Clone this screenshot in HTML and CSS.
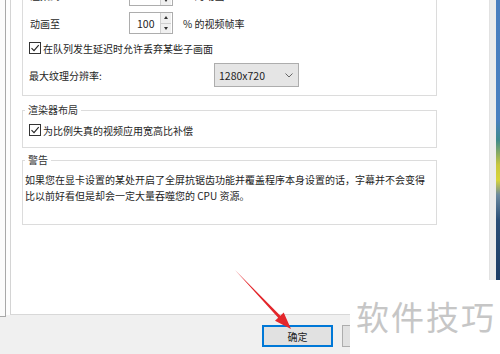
FILE: index.html
```html
<!DOCTYPE html>
<html lang="zh-CN">
<head>
<meta charset="utf-8">
<link rel="stylesheet" href="styles.css">
</head>
<body>
<div class="screen">
  <div class="top">
    <div class="edge"></div>
    <div class="gutter"></div>
    <div class="page">
      <fieldset class="group g1">
        <div class="row spin-row">
          <span class="label">渲染到</span>
          <div class="spin"><span class="val">50</span><span class="arrows"><i class="up"></i><i class="dn"></i></span></div>
          <span class="unit">% 的动画</span>
        </div>
        <div class="row spin-row">
          <span class="label">动画至</span>
          <div class="spin"><span class="val">100</span><span class="arrows"><i class="up"></i><i class="dn"></i></span></div>
          <span class="unit">% 的视频帧率</span>
        </div>
        <div class="row check-row r-check">
          <span class="cb"><svg width="10" height="10" viewBox="0 0 10 10"><path d="M1.5 5.2 L4 7.6 L8.7 2.2" fill="none" stroke="#222" stroke-width="1.1"/></svg></span>
          <span>在队列发生延迟时允许丢弃某些子画面</span>
        </div>
        <div class="row select-row">
          <span class="label wide">最大纹理分辨率:</span>
          <div class="select"><span>1280x720</span><svg width="8" height="5" viewBox="0 0 8 5"><path d="M0.5 0.5 L4 4 L7.5 0.5" fill="none" stroke="#666" stroke-width="1"/></svg></div>
        </div>
      </fieldset>
      <fieldset class="group g2">
        <legend>渲染器布局</legend>
        <div class="row check-row">
          <span class="cb"><svg width="10" height="10" viewBox="0 0 10 10"><path d="M1.5 5.2 L4 7.6 L8.7 2.2" fill="none" stroke="#222" stroke-width="1.1"/></svg></span>
          <span>为比例失真的视频应用宽高比补偿</span>
        </div>
      </fieldset>
      <fieldset class="group g3">
        <legend>警告</legend>
        <p class="warn">如果您在显卡设置的某处开启了全屏抗锯齿功能并覆盖程序本身设置的话，字幕并不会变得<br>比以前好看但是却会一定大量吞噬您的 CPU 资源。</p>
      </fieldset>
    </div>
    <div class="side"></div>
    <div class="desk"></div>
  </div>
  <div class="bottom">
    <button class="btn primary">确定</button>
    <button class="btn" aria-label="取消"></button>
  </div>
  <div class="watermark">软件技巧</div>
  <svg class="arrow" width="500" height="354" viewBox="0 0 500 354">
    <polygon points="235,270 280.4,315.7 283.7,312.6 291,329 275,320.8 278.2,317.7" fill="#e3262b"/>
  </svg>
</div>
</body>
</html>
```

FILE: styles.css
```css
* { box-sizing: border-box; }
html, body { margin: 0; padding: 0; }
body {
  width: 500px;
  height: 354px;
  overflow: hidden;
  background: #f0f0f0;
  font-family: "Noto Sans CJK SC", "Noto Sans", sans-serif;
  font-size: 10px;
  color: #1e1e1e;
}
.screen {
  position: relative;
  width: 500px;
  height: 354px;
  display: flex;
  flex-direction: column;
}
.top {
  height: 317px;
  display: flex;
  background: #f0f0f0;
}
.edge {
  width: 6px;
  height: 317px;
  background: #fbfbfb;
  border-right: 1px solid #a8a8a8;
  border-bottom: 1px solid #a8a8a8;
}
.gutter {
  width: 4px;
  height: 315px;
  background: #fdfdfd;
}
.page {
  width: 479px;
  height: 315px;
  background: #fff;
  border-left: 1px solid #d4d4d4;
  border-bottom: 1px solid #d8d8d8;
  overflow: hidden;
  display: flex;
  flex-direction: column;
}
.side {
  width: 7px;
  height: 317px;
  background: #ececec;
  border-left: 1px solid #e2e2e2;
}
.desk {
  width: 4px;
  height: 317px;
  background: linear-gradient(to bottom, #4a7fbf 0px, #4a80c0 120px, #3f8a8c 140px, #c9c840 165px, #d8d53a 180px, #6c8aa0 195px, #2b4f78 220px, #1d3d66 280px, #1d3d66 317px);
}
.group {
  margin: 0 0 0 11px;
  width: 415px;
  min-inline-size: 0;
  border: 1px solid #dcdcdc;
  padding: 0 0 0 2px;
}
.group legend {
  padding: 0 3px;
  line-height: 14px;
  height: 14px;
  color: #333;
}
.g1 {
  margin-top: -31px;
  padding-top: 14px;
  padding-bottom: 8px;
  display: flex;
  flex-direction: column;
}
.row {
  display: flex;
  align-items: center;
  padding-left: 4px;
}
.spin-row { height: 22px; }
.spin-row + .spin-row { margin-top: 6px; }
.label { width: 100px; padding-left: 1px; }
.label.wide { width: 185px; padding-left: 0; }
.spin {
  width: 44px;
  height: 22px;
  border: 1px solid #adadad;
  background: #fff;
  display: flex;
  align-items: center;
  justify-content: space-between;
}
.val { padding-left: 7px; font-size: 10.5px; }
.arrows {
  width: 11px;
  height: 20px;
  margin-right: 1px;
  display: flex;
  flex-direction: column;
  border-left: 1px solid #cfcfcf;
  background: #f0f0f0;
}
.arrows i {
  flex: 1;
  display: flex;
  align-items: center;
  justify-content: center;
}
.arrows i + i { border-top: 1px solid #cfcfcf; }
.arrows i::before {
  content: "";
  width: 0;
  height: 0;
  border-left: 2.5px solid transparent;
  border-right: 2.5px solid transparent;
}
.arrows .up::before { border-bottom: 3px solid #333; }
.arrows .dn::before { border-top: 3px solid #333; }
.unit { margin-left: 10px; }
.check-row { height: 14px; }
.r-check { margin-top: 7px; }
.cb {
  width: 12px;
  height: 12px;
  border: 1px solid #333;
  background: #fff;
  display: flex;
  align-items: center;
  justify-content: center;
  margin-right: 2px;
}
.select-row { height: 24px; margin-top: 8px; }
.select {
  width: 85px;
  height: 24px;
  border: 1px solid #adadad;
  background: #e5e5e5;
  display: flex;
  align-items: center;
  justify-content: space-between;
  padding: 0 5px 0 4px;
  font-size: 10.5px;
}
.g2 {
  margin-top: 7px;
  padding-bottom: 10px;
}
.g2 .check-row { margin-top: 6px; }
.g3 {
  margin-top: 5px;
  padding-bottom: 20px;
}
.warn {
  margin: 5px 0 0 0;
  line-height: 16px;
  white-space: nowrap;
}
.bottom {
  flex: 1;
  display: flex;
  align-items: flex-start;
  padding: 8px 0 0 262px;
  gap: 9px;
}
.btn {
  width: 71px;
  height: 22px;
  border: 1px solid #adadad;
  background: #e1e1e1;
  font-family: inherit;
  font-size: 10px;
  color: #222;
  padding: 0;
}
.btn.primary {
  border: 1px solid #0078d7;
  box-shadow: inset 0 0 0 1px #0078d7;
}
.watermark {
  position: absolute;
  left: 350px;
  top: 280px;
  width: 150px;
  height: 74px;
  background: #fff;
  color: #c6c6c6;
  font-size: 33px;
  letter-spacing: 2px;
  line-height: 72px;
  padding-left: 6px;
  white-space: nowrap;
}
.arrow {
  position: absolute;
  left: 0;
  top: 0;
  pointer-events: none;
}
```
